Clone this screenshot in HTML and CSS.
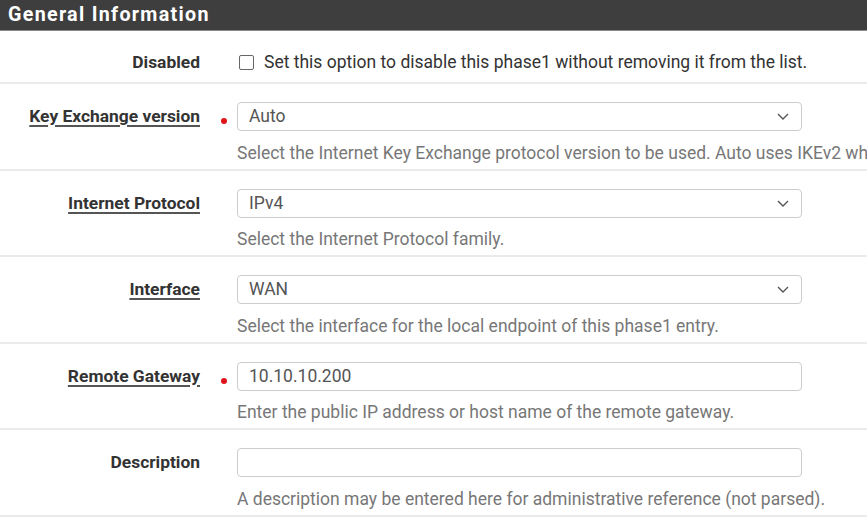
FILE: index.html
```html
<!DOCTYPE html>
<html>
<head>
<meta charset="utf-8">
<link rel="stylesheet" href="styles.css">
</head>
<body>
<div class="panel">
  <div class="panel-heading">General Information</div>

  <div class="row row-check">
    <div class="label">Disabled</div>
    <div class="mark"></div>
    <div class="control">
      <label class="check"><span class="box"></span>Set this option to disable this phase1 without removing it from the list.</label>
    </div>
  </div>

  <div class="row">
    <div class="label"><span class="ul">Key Exchange version</span></div>
    <div class="mark"><span class="dot"></span></div>
    <div class="control">
      <div class="input select">Auto<svg class="chev" viewBox="0 0 12 7" width="12" height="7"><path d="M1 1 L6 6 L11 1" fill="none" stroke="#555" stroke-width="1.4"/></svg></div>
      <div class="help">Select the Internet Key Exchange protocol version to be used. Auto uses IKEv2 when initiator, and accepts either IKEv1 or IKEv2 as responder.</div>
    </div>
  </div>

  <div class="row">
    <div class="label"><span class="ul">Internet Protocol</span></div>
    <div class="mark"></div>
    <div class="control">
      <div class="input select">IPv4<svg class="chev" viewBox="0 0 12 7" width="12" height="7"><path d="M1 1 L6 6 L11 1" fill="none" stroke="#555" stroke-width="1.4"/></svg></div>
      <div class="help">Select the Internet Protocol family.</div>
    </div>
  </div>

  <div class="row">
    <div class="label"><span class="ul">Interface</span></div>
    <div class="mark"></div>
    <div class="control">
      <div class="input select">WAN<svg class="chev" viewBox="0 0 12 7" width="12" height="7"><path d="M1 1 L6 6 L11 1" fill="none" stroke="#555" stroke-width="1.4"/></svg></div>
      <div class="help">Select the interface for the local endpoint of this phase1 entry.</div>
    </div>
  </div>

  <div class="row">
    <div class="label"><span class="ul">Remote Gateway</span></div>
    <div class="mark"><span class="dot"></span></div>
    <div class="control">
      <div class="input">10.10.10.200</div>
      <div class="help">Enter the public IP address or host name of the remote gateway.</div>
    </div>
  </div>

  <div class="row">
    <div class="label">Description</div>
    <div class="mark"></div>
    <div class="control">
      <div class="input"></div>
      <div class="help">A description may be entered here for administrative reference (not parsed).</div>
    </div>
  </div>
</div>
</body>
</html>
```

FILE: styles.css
```css
html, body {
  margin: 0;
  padding: 0;
  background: #fff;
  overflow: hidden;
}
body {
  font-family: Roboto, "Liberation Sans", sans-serif;
  color: #333;
}
.panel-heading {
  height: 30px;
  line-height: 30px;
  background: #3e3e3e;
  border-bottom: 1px solid #8a8a8a;
  color: #fff;
  font-weight: 700;
  font-size: 19.7px;
  letter-spacing: 1.3px;
  padding-left: 8px;
  white-space: nowrap;
}
.row {
  display: grid;
  grid-template-columns: 200px 37px 565px;
  border-bottom: 2px solid #ebebeb;
  padding: 18px 0 5px;
}
.row-check {
  padding: 20px 0 9px;
}
.label {
  text-align: right;
  font-weight: 700;
  font-size: 17.4px;
  line-height: 29px;
  color: #333;
  white-space: nowrap;
}
.row-check .label {
  line-height: 22px;
}
.ul {
  text-decoration: underline;
  text-decoration-thickness: 2px;
  text-underline-offset: 3px;
  text-decoration-color: #555;
}
.mark {
  position: relative;
}
.dot {
  position: absolute;
  left: 21px;
  top: 16px;
  width: 6px;
  height: 6px;
  border-radius: 50%;
  background: #e0131a;
}
.check {
  display: flex;
  align-items: center;
  font-size: 17.5px;
  line-height: 22px;
  color: #333;
  white-space: nowrap;
}
.box {
  flex: none;
  width: 13px;
  height: 13px;
  border: 1px solid #666;
  border-radius: 2px;
  margin: 0 10px 0 2px;
  background: #fff;
}
.input {
  box-sizing: border-box;
  height: 29px;
  border: 1px solid #ccc;
  border-radius: 4px;
  padding: 0 10px 0 11px;
  font-size: 17.5px;
  line-height: 27px;
  color: #555;
  display: flex;
  align-items: center;
  justify-content: space-between;
}
.chev {
  margin-right: 2px;
}
.help {
  margin-top: 10.5px;
  font-size: 17.5px;
  line-height: 22px;
  color: #777;
  white-space: nowrap;
}
```
